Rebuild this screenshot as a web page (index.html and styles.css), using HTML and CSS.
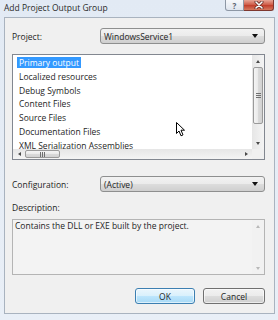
FILE: index.html
```html
<!DOCTYPE html>
<html lang="en">
<head>
  <meta charset="UTF-8">
  <title>Add Project Output Group</title>
  <link rel="stylesheet" href="styles.css">
</head>
<body>

  <div class="window">
    <div class="titlebar">
      <span class="title">Add Project Output Group</span>
      <div class="caption-buttons">
        <span class="cap-btn help">?</span>
        <span class="cap-btn close">
          <svg width="12" height="8" viewBox="0 0 12 8">
            <path d="M3 1 L9 7 M9 1 L3 7" stroke="#5a2620" stroke-width="3" stroke-linecap="round"/>
            <path d="M3 1 L9 7 M9 1 L3 7" stroke="#fff" stroke-width="1.6" stroke-linecap="round"/>
          </svg>
        </span>
      </div>
    </div>

    <div class="client">
      <div class="field-row">
        <span class="field-label">Project:</span>
        <div class="combo">
          <span>WindowsService1</span>
          <span class="combo-arrow"></span>
        </div>
      </div>

      <div class="listbox">
        <div class="list-body">
          <ul class="items">
            <li><span class="selected">Primary output</span></li>
            <li><span>Localized resources</span></li>
            <li><span>Debug Symbols</span></li>
            <li><span>Content Files</span></li>
            <li><span>Source Files</span></li>
            <li><span>Documentation Files</span></li>
            <li><span>XML Serialization Assemblies</span></li>
          </ul>
          <div class="vscroll">
            <div class="sb-btn"><span class="arrow-up"></span></div>
            <div class="sb-thumb v"><span class="grip"></span></div>
            <div class="sb-track"></div>
            <div class="sb-btn"><span class="arrow-down"></span></div>
          </div>
        </div>
        <div class="hscroll-row">
          <div class="hscroll">
            <div class="sb-btn h"><span class="arrow-left"></span></div>
            <div class="sb-thumb h"><span class="grip"></span></div>
            <div class="sb-track"></div>
            <div class="sb-btn h"><span class="arrow-right"></span></div>
          </div>
          <div class="corner"></div>
        </div>
      </div>

      <div class="field-row config">
        <span class="field-label">Configuration:</span>
        <div class="combo">
          <span>(Active)</span>
          <span class="combo-arrow"></span>
        </div>
      </div>

      <div class="desc-label">Description:</div>
      <div class="desc-box">
        <div class="desc-text">Contains the DLL or EXE built by the project.</div>
        <div class="vscroll disabled">
          <div class="sb-btn"><span class="arrow-up"></span></div>
          <div class="sb-track"></div>
          <div class="sb-btn"><span class="arrow-down"></span></div>
        </div>
      </div>

      <div class="button-row">
        <button class="btn default">OK</button>
        <button class="btn">Cancel</button>
      </div>
    </div>

    <svg class="cursor" width="10" height="15" viewBox="0 0 10 15">
      <path d="M0.5 0.5 L0.5 11.5 L3 9 L5 13.8 L7 12.9 L5 8.2 L8.5 8.2 Z" fill="#fff" stroke="#000" stroke-width="1" stroke-linejoin="round"/>
    </svg>
  </div>

</body>
</html>
```

FILE: styles.css
```css
body {
  margin: 0;
  font-family: "Open Sans", "Segoe UI", sans-serif;
  font-size: 8.5px;
  color: #1e1e1e;
  background-color: #e5edf6;
}

.window {
  position: relative;
  width: 278px;
  height: 320px;
  display: flex;
  flex-direction: column;
  background: linear-gradient(#e2eaf4, #e9eff7);
  overflow: hidden;
}

/* title bar */
.titlebar {
  height: 17px;
  display: flex;
  align-items: flex-start;
  padding-left: 4px;
}

.title {
  line-height: 16px;
  color: #2a2a2a;
}

.caption-buttons {
  margin-left: auto;
  margin-right: 4px;
  display: flex;
}

.cap-btn {
  height: 11px;
  box-sizing: border-box;
  display: flex;
  align-items: center;
  justify-content: center;
}

.cap-btn.help {
  width: 19px;
  border: 1px solid #8d97a5;
  border-top: none;
  border-radius: 0 0 0 3px;
  background: linear-gradient(#f6f8fb, #dfe5ee);
  color: #5b6470;
  font-size: 8px;
  font-weight: bold;
}

.cap-btn.close {
  width: 30px;
  border: 1px solid #7e3830;
  border-top: none;
  border-left: none;
  border-radius: 0 0 3px 0;
  background: linear-gradient(#e7a596, #d0604c 45%, #c2412e 55%, #d67a5f);
}

/* client area */
.client {
  flex: 1;
  margin: 0 3px 6px 4px;
  border: 1px solid #a9b3bf;
  background-color: #f0f0f0;
  padding: 10px 9px 9px 7px;
  display: flex;
  flex-direction: column;
}

.field-row {
  display: flex;
  align-items: center;
  height: 16px;
}

.field-row.config {
  margin-top: 16px;
}

.field-label {
  width: 88px;
}

.combo {
  flex: 1;
  height: 16px;
  box-sizing: border-box;
  border: 1px solid #8e8f8f;
  border-radius: 3px;
  background: linear-gradient(#f2f2f2, #ebebeb 50%, #dddddd 50%, #cfcfcf);
  padding: 0 3px;
  display: flex;
  align-items: center;
  justify-content: space-between;
}

.combo-arrow {
  width: 0;
  height: 0;
  margin-right: 3px;
  border-left: 3.5px solid transparent;
  border-right: 3.5px solid transparent;
  border-top: 4px solid #111;
}

/* list box */
.listbox {
  margin-top: 10px;
  height: 106px;
  box-sizing: border-box;
  border: 1px solid #828790;
  background: #fff;
  display: flex;
  flex-direction: column;
}

.list-body {
  flex: 1;
  display: flex;
  overflow: hidden;
}

.items {
  flex: 1;
  list-style: none;
  margin: 0;
  padding: 1px 0 0 4px;
  overflow: hidden;
}

.items li {
  height: 13.8px;
  line-height: 13.8px;
  white-space: nowrap;
}

.items span {
  padding: 0 2px;
}

.items .selected {
  background-color: #3399ff;
  color: #fff;
}

/* scroll bars */
.vscroll {
  width: 12px;
  display: flex;
  flex-direction: column;
  background: linear-gradient(to right, #e6e6e6, #f4f4f4);
}

.sb-btn {
  height: 12px;
  display: flex;
  align-items: center;
  justify-content: center;
}

.sb-btn.h {
  width: 12px;
  height: auto;
}

.sb-track {
  flex: 1;
}

.sb-thumb {
  box-sizing: border-box;
  border: 1px solid #9a9a9a;
  border-radius: 2px;
  display: flex;
  align-items: center;
  justify-content: center;
}

.sb-thumb.v {
  height: 57px;
  margin: 0 1px;
  background: linear-gradient(to right, #f4f4f4, #e9e9e9 50%, #dadada 50%, #d2d2d2);
}

.sb-thumb.h {
  width: 35px;
  margin: 1px 0;
  background: linear-gradient(#f4f4f4, #e9e9e9 50%, #dadada 50%, #d2d2d2);
}

.sb-thumb.v .grip {
  width: 5px;
  height: 5px;
  background: repeating-linear-gradient(#707070 0 1px, transparent 1px 2px);
}

.sb-thumb.h .grip {
  width: 5px;
  height: 5px;
  background: repeating-linear-gradient(to right, #707070 0 1px, transparent 1px 2px);
}

.arrow-up,
.arrow-down,
.arrow-left,
.arrow-right {
  width: 0;
  height: 0;
}

.arrow-up {
  border-left: 2.5px solid transparent;
  border-right: 2.5px solid transparent;
  border-bottom: 3px solid #4a4a4a;
}

.arrow-down {
  border-left: 2.5px solid transparent;
  border-right: 2.5px solid transparent;
  border-top: 3px solid #4a4a4a;
}

.arrow-left {
  border-top: 2.5px solid transparent;
  border-bottom: 2.5px solid transparent;
  border-right: 3px solid #4a4a4a;
}

.arrow-right {
  border-top: 2.5px solid transparent;
  border-bottom: 2.5px solid transparent;
  border-left: 3px solid #4a4a4a;
}

.hscroll-row {
  height: 10px;
  display: flex;
}

.hscroll {
  flex: 1;
  display: flex;
  background: linear-gradient(#e6e6e6, #f4f4f4);
}

.corner {
  width: 12px;
  background: #f0f0f0;
}

/* description */
.desc-label {
  margin-top: 10px;
  line-height: 12px;
}

.desc-box {
  margin-top: 5px;
  height: 56px;
  box-sizing: border-box;
  border: 1px solid #b4b4b4;
  background: #f3f3f3;
  display: flex;
}

.desc-text {
  flex: 1;
  padding: 0 2px;
  line-height: 12px;
}

.vscroll.disabled {
  background: #f1f1f1;
}

.vscroll.disabled .arrow-up {
  border-bottom-color: #b8b8b8;
}

.vscroll.disabled .arrow-down {
  border-top-color: #b8b8b8;
}

/* buttons */
.button-row {
  margin-top: auto;
  display: flex;
  justify-content: flex-end;
  gap: 8px;
}

.btn {
  height: 16px;
  box-sizing: border-box;
  padding: 0;
  font-family: inherit;
  font-size: 8.5px;
  color: #1e1e1e;
  border: 1px solid #707070;
  border-radius: 3px;
  width: 62px;
  background: linear-gradient(#f2f2f2, #ebebeb 50%, #dddddd 50%, #cfcfcf);
  box-shadow: inset 0 0 0 1px rgba(255, 255, 255, 0.6);
}

.btn.default {
  width: 60px;
  border-color: #3c7fb1;
  background: linear-gradient(#eaf6fd, #d9f0fc 50%, #bee6fd 50%, #a7d9f5);
}

.cursor {
  position: absolute;
  left: 176px;
  top: 122px;
}
```
